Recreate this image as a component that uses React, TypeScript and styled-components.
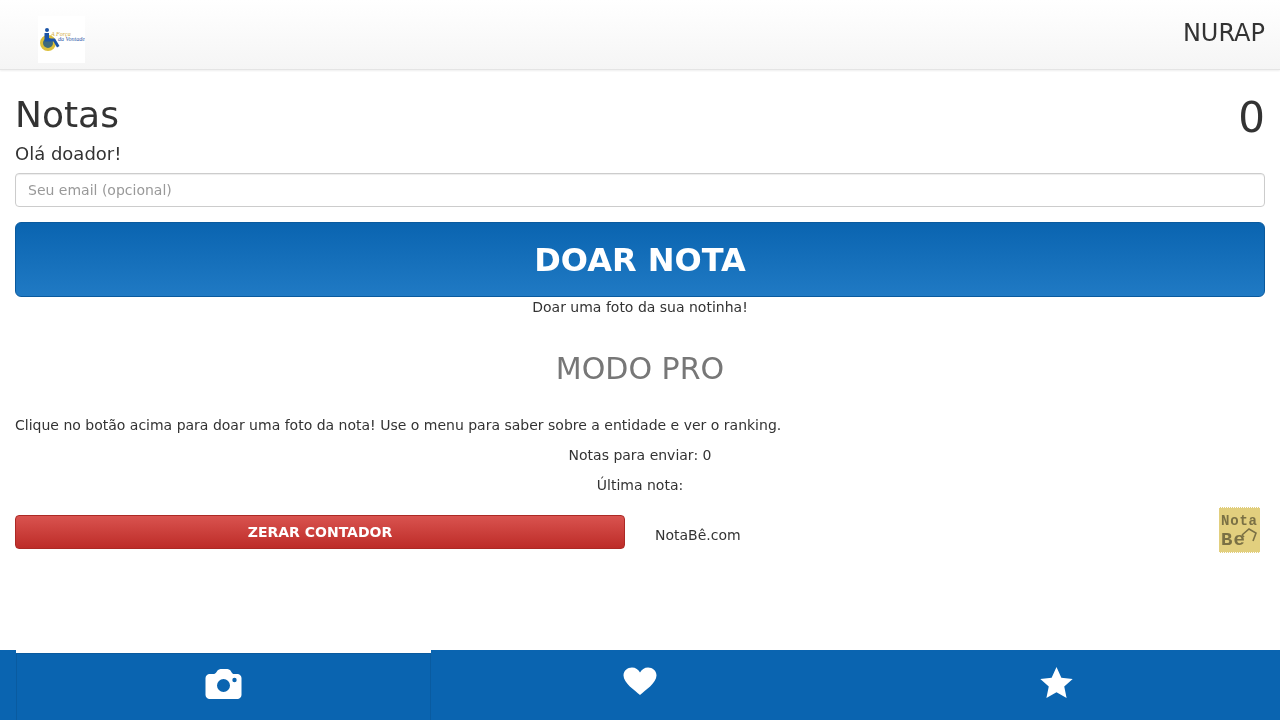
import React from "react";
import styled, { createGlobalStyle } from "styled-components";

const Global = createGlobalStyle`
  html, body { margin: 0; padding: 0; background: #fff; }
  body {
    font-family: "DejaVu Sans", sans-serif;
    font-size: 14px;
    line-height: 20px;
    color: #333;
  }
  * { box-sizing: border-box; }
`;

const Page = styled.div`
  height: 720px;
  display: flex;
  flex-direction: column;
  overflow: hidden;
  opacity: 0.999;
`;

const Navbar = styled.header`
  height: 70px;
  flex: none;
  display: flex;
  justify-content: space-between;
  padding: 16px 15px 0 38px;
  background: linear-gradient(to bottom, #ffffff, #f5f5f5);
  border-bottom: 1px solid #e4e4e4;
  box-shadow: 0 1px 2px rgba(0, 0, 0, 0.08);
`;

const Logo = styled.svg`
  width: 47px;
  height: 47px;
  display: block;
`;

const Brand = styled.div`
  font-size: 24px;
  line-height: 34px;
  color: #333;
`;

const Content = styled.main`
  flex: 1;
  padding: 20px 15px 0;
  display: flex;
  flex-direction: column;
`;

const TitleRow = styled.div`
  display: flex;
  justify-content: space-between;
  height: 52px;
`;

const Title = styled.h1`
  margin: 0;
  font-size: 36px;
  font-weight: 400;
  line-height: 50px;
`;

const Count = styled.div`
  font-size: 42px;
  line-height: 56px;
`;

const Greeting = styled.div`
  font-size: 18px;
  line-height: 24px;
  height: 24px;
  margin-bottom: 7px;
`;

const Email = styled.input`
  display: block;
  width: 100%;
  height: 34px;
  padding: 6px 12px;
  font: inherit;
  color: #555;
  background: #fff;
  border: 1px solid #ccc;
  border-radius: 4px;
  box-shadow: inset 0 1px 1px rgba(0, 0, 0, 0.075);
  &::placeholder { color: #999; opacity: 1; }
`;

const Donate = styled.button`
  display: block;
  width: 100%;
  height: 75px;
  margin-top: 15px;
  padding: 0;
  font-family: inherit;
  font-size: 32px;
  font-weight: 700;
  color: #fff;
  background: linear-gradient(to bottom, #0a64b0, #207ac4);
  border: 1px solid #0a5a9e;
  border-radius: 6px;
`;

const Centered = styled.div`
  text-align: center;
`;

const Pro = styled.h2`
  margin: 35px 0 0;
  text-align: center;
  font-size: 30px;
  font-weight: 400;
  line-height: 33px;
  color: #777;
`;

const Paragraph = styled.p`
  margin: 30px 0 0;
`;

const Stat = styled(Centered)`
  margin-top: 10px;
`;

const FooterRow = styled.div`
  margin-top: 20px;
  display: grid;
  grid-template-columns: 610px 1fr;
  column-gap: 30px;
`;

const Reset = styled.button`
  height: 34px;
  font-family: inherit;
  font-size: 14px;
  font-weight: 700;
  color: #fff;
  background: linear-gradient(to bottom, #d9534f, #bd2c28);
  border: 1px solid #ac2925;
  border-radius: 4px;
`;

const Site = styled.div`
  padding-top: 10px;
  height: 40px;
  position: relative;
`;

const Stamp = styled.div`
  position: absolute;
  right: 5px;
  top: -8px;
  width: 41px;
  height: 46px;
  background: #e2cf7e;
  border-top: 1px dotted #fff;
  border-bottom: 1px dotted #fff;
  font-family: "Liberation Mono", monospace;
  font-weight: 700;
  color: #7a7044;
`;

const StampTop = styled.div`
  position: absolute;
  left: 2px;
  top: 5px;
  font-size: 14px;
  line-height: 16px;
  letter-spacing: 0.8px;
`;

const StampBottom = styled.div`
  position: absolute;
  left: 2px;
  top: 21px;
  font-size: 19px;
  line-height: 22px;
  letter-spacing: 1px;
`;

const StampArrow = styled.svg`
  position: absolute;
  right: 2px;
  top: 19px;
  width: 17px;
  height: 16px;
`;

const TabBar = styled.nav`
  height: 70px;
  flex: none;
  background: #0a64b0;
  display: grid;
  grid-template-columns: 415.5px 418px 1fr;
  padding: 0 15.5px;
`;

const Tab = styled.a<{ $active?: boolean }>`
  display: flex;
  justify-content: center;
  align-items: flex-start;
  height: 70px;
  color: #fff;
  ${(p) =>
    p.$active
      ? `
    border-top: 3px solid #fff;
    box-shadow: inset 0 1px 0 #0a5a9e, inset 1px 0 0 #095ba0, inset -1px 0 0 #095ba0;
    padding-top: 15px;
  `
      : `padding-top: 17px;`}
`;

const Icon = styled.svg`
  display: block;
  fill: currentColor;
`;

export default function App() {
  return (
    <Page>
      <Global />
      <Navbar>
        <Logo viewBox="0 0 47 47">
          <rect width="47" height="47" fill="#fff" />
          <circle cx="10" cy="27" r="7" fill="#3f6a7c" />
          <circle cx="10" cy="27" r="6.500" fill="none" stroke="#dcbf3a" strokeWidth="3" />
          <circle cx="9" cy="14" r="2" fill="#1c55a8" />
          <path d="M6.500 17h4.500v5.500h6l4.500 7.500-2.500 1.500-3.500-6H6.500z" fill="#1c55a8" />
          <text x="13" y="20" fontSize="6" fontStyle="italic" fill="#d3ad3c" fontFamily="Liberation Serif, serif">A Força</text>
          <text x="20" y="25" fontSize="6" fontStyle="italic" fill="#2f5aa8" fontFamily="Liberation Serif, serif">da Vontade</text>
        </Logo>
        <Brand>NURAP</Brand>
      </Navbar>
      <Content>
        <TitleRow>
          <Title>Notas</Title>
          <Count>0</Count>
        </TitleRow>
        <Greeting>Olá doador!</Greeting>
        <Email placeholder="Seu email (opcional)" />
        <Donate>DOAR NOTA</Donate>
        <Centered>Doar uma foto da sua notinha!</Centered>
        <Pro>MODO PRO</Pro>
        <Paragraph>Clique no botão acima para doar uma foto da nota! Use o menu para saber sobre a entidade e ver o ranking.</Paragraph>
        <Stat>Notas para enviar: 0</Stat>
        <Stat>Última nota:</Stat>
        <FooterRow>
          <Reset>ZERAR CONTADOR</Reset>
          <Site>
            NotaBê.com
            <Stamp>
              <StampTop>Nota</StampTop>
              <StampBottom>Be</StampBottom>
              <StampArrow viewBox="0 0 17 16">
                <path d="M1 8 8 2l7 4-3 8M1 8l2 2" fill="none" stroke="#7a7044" strokeWidth="1.600" />
              </StampArrow>
            </Stamp>
          </Site>
        </FooterRow>
      </Content>
      <TabBar>
        <Tab $active>
          <Icon width="39" height="32" viewBox="0 0 38 32">
            <path fillRule="evenodd" d="M5 6h4c1 0 2-.5 3-2l1-1.500C14 1.500 15 1 16 1h7c1 0 2 .5 3 1.500L27.500 5c.5.5 1 1 2 1H33c2 0 4 2 4 4v17c0 2-2 4-4 4H5c-2 0-4-2-4-4V10c0-2 2-4 4-4zM19 11a6.500 6.500 0 1 0 0 13 6.500 6.500 0 0 0 0-13zM30 9.800a2.200 2.200 0 1 0 0 4.400 2.200 2.200 0 0 0 0-4.400z" />
          </Icon>
        </Tab>
        <Tab>
          <Icon width="34" height="28" viewBox="0 0 34 28">
            <path d="M17 28C12 23.500 0.500 16 0.500 8.500 0.500 3.500 4.500 0.500 9 0.500c3.500 0 6.500 2 8 5 1.500-3 4.500-5 8-5 4.500 0 8.500 3 8.500 8 0 7.500-11.500 15-16.500 19.500z" />
          </Icon>
        </Tab>
        <Tab>
          <Icon width="33" height="32" viewBox="0 0 32 31">
            <path d="M16 0l4.700 10.300 11 1.200-8.200 7.500 2.300 11L16 24.500 6.200 30l2.300-11L.3 11.500l11-1.200z" />
          </Icon>
        </Tab>
      </TabBar>
    </Page>
  );
}
